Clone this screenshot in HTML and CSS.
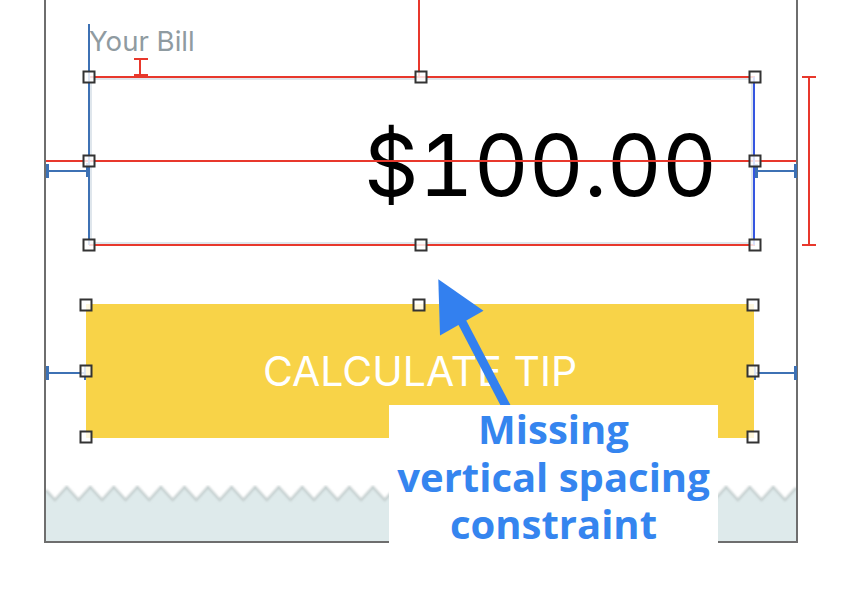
FILE: index.html
```html
<!DOCTYPE html>
<html>
<head>
<meta charset="utf-8">
<link rel="stylesheet" href="styles.css">
</head>
<body>
<div class="page">
  <div class="frame">
    <div class="label">Your Bill</div>
    <div class="field"><span class="amount">$100.00</span></div>
    <div class="button">CALCULATE TIP</div>
    <svg class="zigzag" width="750" height="56" viewBox="0 0 750 56">
      <defs>
        <filter id="soft" x="-5%" y="-50%" width="110%" height="200%">
          <feGaussianBlur stdDeviation="0.8"/>
        </filter>
      </defs>
      <polygon class="zz-fill" points="0,5.2 8.9,15 20.7,2 32.5,15 44.3,2 56.1,15 67.8,2 79.6,15 91.4,2 103.2,15 114.9,2 126.7,15 138.5,2 150.3,15 162,2 173.8,15 185.6,2 197.4,15 209.1,2 220.9,15 232.7,2 244.5,15 256.2,2 268,15 279.8,2 291.6,15 303.3,2 315.1,15 326.9,2 338.7,15 350.4,2 362.2,15 374,2 385.8,15 397.5,2 409.3,15 421.1,2 432.9,15 444.6,2 456.4,15 468.2,2 480,15 491.7,2 503.5,15 515.3,2 527.1,15 538.8,2 550.6,15 562.4,2 574.2,15 585.9,2 597.7,15 609.5,2 621.3,15 633,2 644.8,15 656.6,2 668.4,15 680.1,2 691.9,15 703.7,2 715.5,15 727.2,2 739,15 750,2.9 750,56 0,56"/>
      <polyline class="zz-edge" filter="url(#soft)" points="0,5.2 8.9,15 20.7,2 32.5,15 44.3,2 56.1,15 67.8,2 79.6,15 91.4,2 103.2,15 114.9,2 126.7,15 138.5,2 150.3,15 162,2 173.8,15 185.6,2 197.4,15 209.1,2 220.9,15 232.7,2 244.5,15 256.2,2 268,15 279.8,2 291.6,15 303.3,2 315.1,15 326.9,2 338.7,15 350.4,2 362.2,15 374,2 385.8,15 397.5,2 409.3,15 421.1,2 432.9,15 444.6,2 456.4,15 468.2,2 480,15 491.7,2 503.5,15 515.3,2 527.1,15 538.8,2 550.6,15 562.4,2 574.2,15 585.9,2 597.7,15 609.5,2 621.3,15 633,2 644.8,15 656.6,2 668.4,15 680.1,2 691.9,15 703.7,2 715.5,15 727.2,2 739,15 750,2.9"/>
    </svg>
  </div>

  <svg class="overlay" width="846" height="590" viewBox="0 0 846 590">
    <g class="red">
      <rect x="418" y="0" width="2" height="77"/>
      <rect x="89" y="76" width="666" height="2"/>
      <rect x="89" y="244" width="666" height="2"/>
      <rect x="46" y="160" width="750" height="2"/>
      <rect x="139" y="59" width="2" height="17"/>
      <rect x="134" y="58" width="14" height="2"/>
      <rect x="134" y="74" width="14" height="2"/>
      <rect x="808" y="77" width="2" height="168"/>
      <rect x="802" y="76" width="14" height="2"/>
      <rect x="802" y="244" width="14" height="2"/>
    </g>
    <g class="blue">
      <rect x="88" y="24" width="2" height="221"/>
      <rect x="46" y="170" width="42" height="2"/>
      <rect x="46" y="164" width="3" height="14"/>
      <rect x="86" y="163" width="3" height="14"/>
      <rect x="755" y="170" width="41" height="2"/>
      <rect x="755" y="164" width="3" height="14"/>
      <rect x="794" y="164" width="3" height="14"/>
      <rect x="46" y="372" width="40" height="2"/>
      <rect x="46" y="366" width="3" height="14"/>
      <rect x="84" y="366" width="2" height="14"/>
      <rect x="754" y="372" width="42" height="2"/>
      <rect x="754" y="366" width="2" height="14"/>
      <rect x="794" y="366" width="3" height="14"/>
    </g>
    <rect class="bright" x="753" y="77" width="2" height="168"/>
    <g class="handles">
      <rect x="83.5" y="71.5" width="11" height="11"/>
      <rect x="415.5" y="71.5" width="11" height="11"/>
      <rect x="749.5" y="71.5" width="11" height="11"/>
      <rect x="83.5" y="155.5" width="11" height="11"/>
      <rect x="749.5" y="155.5" width="11" height="11"/>
      <rect x="83.5" y="239.5" width="11" height="11"/>
      <rect x="415.5" y="239.5" width="11" height="11"/>
      <rect x="749.5" y="239.5" width="11" height="11"/>
      <rect x="80.5" y="299.5" width="11" height="11"/>
      <rect x="413.5" y="299.5" width="11" height="11"/>
      <rect x="747.5" y="299.5" width="11" height="11"/>
      <rect x="80.5" y="365.5" width="11" height="11"/>
      <rect x="747.5" y="365.5" width="11" height="11"/>
      <rect x="80.5" y="431.5" width="11" height="11"/>
      <rect x="413.5" y="431.5" width="11" height="11"/>
      <rect x="747.5" y="431.5" width="11" height="11"/>
    </g>
    <g class="arrow">
      <line x1="462" y1="322" x2="509" y2="412"/>
      <polygon points="438.3,279.3 483.5,310.7 440,335.5"/>
    </g>
  </svg>

  <div class="callout">
    <div class="callout-line">Missing</div>
    <div class="callout-line">vertical spacing</div>
    <div class="callout-line">constraint</div>
  </div>
</div>
</body>
</html>
```

FILE: styles.css
```css
html, body {
  margin: 0;
  padding: 0;
  background: #ffffff;
}

.page {
  position: relative;
  width: 846px;
  height: 590px;
  overflow: hidden;
  background: #ffffff;
}

.frame {
  box-sizing: border-box;
  margin-left: 44px;
  width: 754px;
  height: 543px;
  border: 2px solid #6e6e6e;
  border-top: 0;
  padding-top: 27px;
  display: flex;
  flex-direction: column;
}

.label {
  margin-left: 43px;
  font-family: Inter, "Liberation Sans", sans-serif;
  font-size: 27.6px;
  line-height: 28px;
  height: 28px;
  color: #8f9ba1;
}

.field {
  box-sizing: border-box;
  margin-top: 23px;
  margin-left: 44px;
  width: 663px;
  height: 166px;
  border: 2px solid #dfe6ec;
  padding-top: 8px;
  padding-right: 34px;
  display: flex;
  justify-content: flex-end;
  align-items: center;
}

.amount {
  font-family: Inter, "Liberation Sans", sans-serif;
  font-size: 85px;
  line-height: 85px;
  font-variant-numeric: tabular-nums;
  color: #000000;
}

.button {
  box-sizing: border-box;
  margin-top: 60px;
  margin-left: 40px;
  width: 668px;
  height: 134px;
  padding-top: 1px;
  background: #f8d348;
  color: #ffffff;
  font-family: Inter, "Liberation Sans", sans-serif;
  font-size: 41px;
  line-height: 41px;
  display: flex;
  align-items: center;
  justify-content: center;
}

.zigzag {
  display: block;
  margin-top: auto;
}

.zz-fill {
  fill: #deeaeb;
}

.zz-edge {
  fill: none;
  stroke: #c3cdcd;
  stroke-width: 2.5;
}

.overlay {
  position: absolute;
  left: 0;
  top: 0;
  pointer-events: none;
}

.red rect {
  fill: #e8382c;
}

.blue rect {
  fill: #3d71b4;
}

.bright {
  fill: #3556e0;
}

.handles rect {
  fill: rgba(255, 255, 255, 0.82);
  stroke: #333333;
  stroke-width: 2;
}

.arrow line {
  stroke: #3380ef;
  stroke-width: 9;
}

.arrow polygon {
  fill: #3380ef;
}

.callout {
  position: absolute;
  left: 389px;
  top: 405px;
  width: 329px;
  height: 160px;
  background: #ffffff;
  display: flex;
  flex-direction: column;
  align-items: center;
  font-family: "Open Sans", "Liberation Sans", sans-serif;
  font-weight: 700;
  font-size: 40px;
  color: #3585ef;
}

.callout-line {
  height: 47.5px;
  line-height: 47.5px;
  white-space: nowrap;
}
```
